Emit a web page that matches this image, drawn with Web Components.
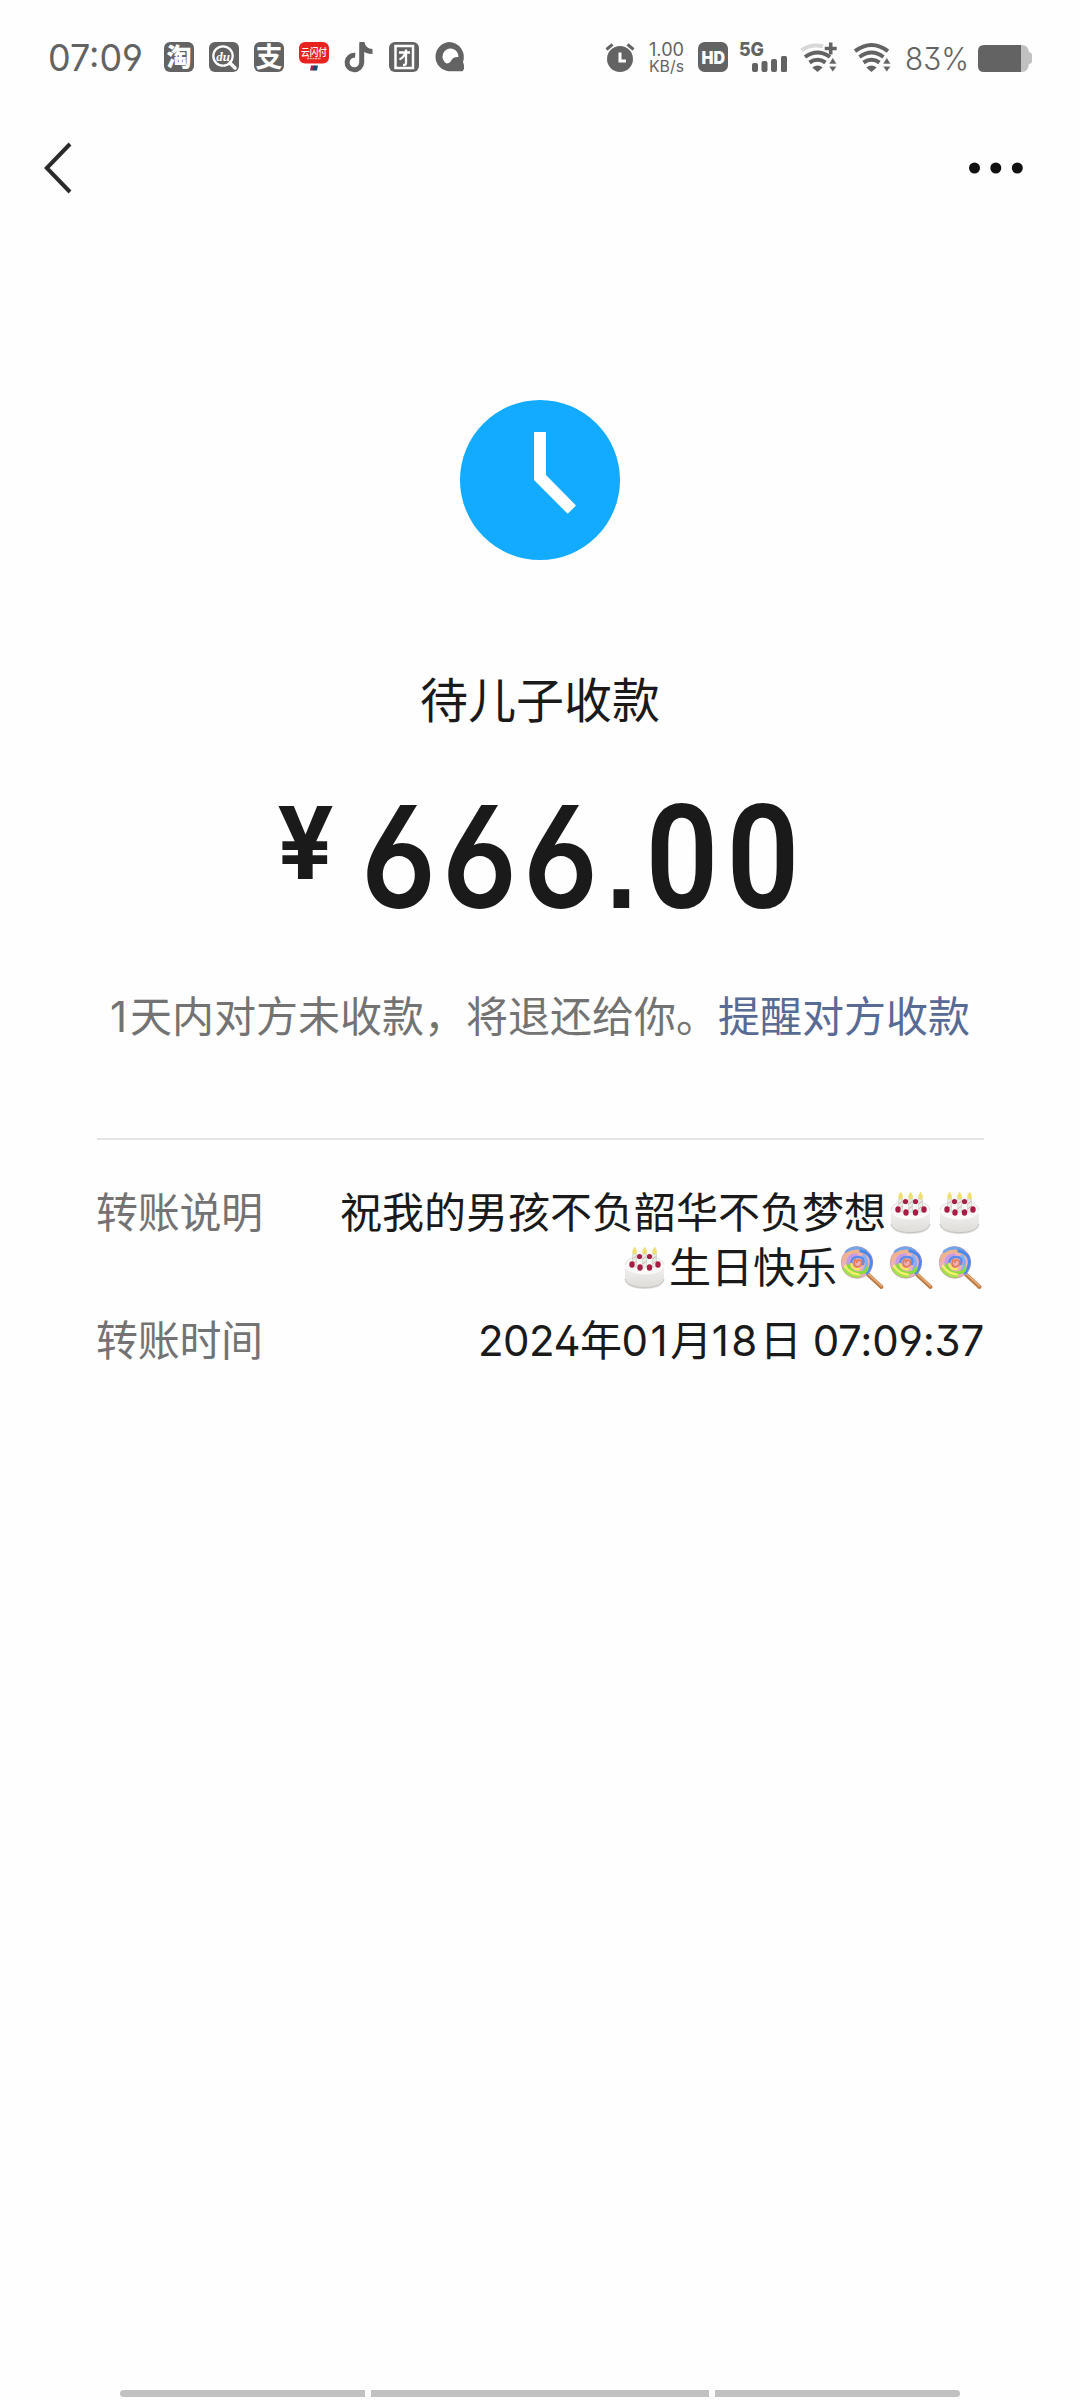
<!DOCTYPE html>
<html lang="zh-CN">
<head>
<meta charset="utf-8">
<title>转账</title>
<style>
html,body{margin:0;background:#fefefe}
body{width:1080px;height:2400px;overflow:hidden;font-family:Inter,"Noto Sans CJK SC",sans-serif;font-feature-settings:"cv03","cv04","ss01"}
</style>
</head>
<body>
<transfer-page></transfer-page>
<script>
const define = (name, html) => customElements.define(name, class extends HTMLElement {
  constructor() {
    super();
    this.attachShadow({mode: 'open'}).innerHTML = html;
  }
});

/* A run of text set to an exact width: w, h = box; size = font size; base = baseline. */
customElements.define('fit-text', class extends HTMLElement {
  connectedCallback() {
    const a = n => this.getAttribute(n);
    this.attachShadow({mode: 'open'}).innerHTML = `<style>:host{display:block;flex:none}svg{display:block;overflow:visible}</style>
      <svg width="${a('w')}" height="${a('h')}"><text x="0" y="${a('base')}" font-size="${a('size')}" font-weight="${a('weight') || 400}" fill="currentColor" textLength="${a('w')}" lengthAdjust="spacingAndGlyphs">${a('text')}</text></svg>`;
  }
});

/* The large amount: condensed digits on an even 81px pitch. */
customElements.define('amount-digits', class extends HTMLElement {
  connectedCallback() {
    const k = .88, at = (...xs) => xs.map(x => (x / k).toFixed(1)).join(' ');
    this.attachShadow({mode: 'open'}).innerHTML = `<style>:host{display:block;flex:none}svg{display:block;overflow:visible}</style>
      <svg width="440" height="105"><text transform="scale(${k} 1)" y="105" font-size="142" font-weight="600" fill="currentColor" x="${at(1, 82, 163)}">666<tspan font-family="Liberation Sans" font-size="126" font-weight="700" x="${at(246)}">.</tspan><tspan font-family="Roboto" font-size="145" x="${at(285.5, 366.5)}">00</tspan></text></svg>`;
  }
});

const CJK = `font-family="Noto Sans CJK SC" text-anchor="middle"`;
const icons = {
  tao: [30, 30, `<rect width="30" height="30" rx="6" fill="currentColor"/><text ${CJK} x="15" y="24" font-size="25" font-weight="900" fill="#fff">淘</text>`],
  du: [30, 30, `<rect width="30" height="30" rx="6" fill="currentColor"/><circle cx="14" cy="14" r="9.700" fill="none" stroke="#fff" stroke-width="2.200"/><path d="M21 21l5 5" stroke="#fff" stroke-width="3.500" stroke-linecap="round"/><text x="14" y="18.500" text-anchor="middle" font-family="Liberation Serif" font-style="italic" font-weight="700" font-size="13" fill="#fff">du</text>`],
  zhi: [30, 30, `<rect width="30" height="30" rx="6" fill="currentColor"/><text ${CJK} x="15" y="25" font-size="27" font-weight="700" fill="#fff">支</text>`],
  ysf: [30, 30, `<rect width="30" height="21.500" rx="6" fill="#e8231f"/><text ${CJK} x="15" y="13.500" font-size="10" font-weight="500" fill="#fff" textLength="26" lengthAdjust="spacingAndGlyphs">云闪付</text><path d="M8 16.500h14" stroke="#ffb3ae" stroke-width="1.500" stroke-dasharray="2 .7"/><path d="M12 23.500h4l-1 5h-4z" fill="#a3204a"/><path d="M15 23.500h4l-1 5h-4z" fill="#0b4f70"/>`],
  tok: [30, 30, `<path d="M17.700 1.500V20.500A7.300 7.300 0 1 1 11.200 13.200" fill="none" stroke="currentColor" stroke-width="5"/><path d="M15.200 0h5.200Q21.500 6.500 28.500 7v5Q21.500 11.800 17.500 8z" fill="currentColor"/>`],
  tuan: [30, 30, `<rect width="30" height="30" rx="6" fill="currentColor"/><rect x="6.500" y="4" width="17.500" height="22" fill="none" stroke="#fff" stroke-width="2.500"/><path d="M10 10.500h11M17 7.500v13.500q0 2-2 2h-1M16 12q-2 4-5.500 5.500" fill="none" stroke="#fff" stroke-width="2.300"/>`],
  q: [30, 30, `<path d="M15 0a15 15 0 0 1 14 20q1.500 3 1 7l-1.500 2.300H15A14.700 14.700 0 0 1 15 0z" fill="currentColor"/><path d="M12.500 21.500a8 8 0 1 1 12-6.500q-5 -.5-7 3-1.300 3.200-5 3.500z" fill="#fff"/>`],
  alarm: [30, 30, `<circle cx="15" cy="17" r="13" fill="currentColor"/><path d="M1.500 7.500l6-5.200M28.500 7.500l-6-5.200" stroke="currentColor" stroke-width="3"/><path d="M15 10.500v8.500h6" fill="none" stroke="#fff" stroke-width="3"/>`],
  hd: [30, 30, `<rect width="30" height="30" rx="6.500" fill="currentColor"/><text x="3.500" y="21.500" font-family="Inter" font-weight="900" font-size="17" fill="#fff" textLength="23.500" lengthAdjust="spacingAndGlyphs">HD</text>`],
  sig: [48, 30, `<text x="-1" y="14.200" font-family="Inter" font-weight="800" font-size="19" fill="currentColor" textLength="25" lengthAdjust="spacingAndGlyphs">5G</text><rect x="12" y="21" width="6" height="9" rx="2" fill="currentColor"/><rect x="21.500" y="19" width="6" height="11" rx="2" fill="currentColor"/><rect x="31" y="17" width="6" height="13" rx="2" fill="currentColor"/><rect x="41" y="14" width="6" height="16" rx="1.500" fill="currentColor"/>`],
  wifiplus: [38, 30, `<path d="M1.500 8.200Q11 1.500 23 4.200" fill="none" stroke="#d8d8d8" stroke-width="4"/><path d="M5 15Q17.500 6 30 15M9.500 20.500Q17.500 15 25.500 20.500" fill="none" stroke="currentColor" stroke-width="4"/><path d="M12.300 25.500Q17.500 21.500 22.700 25.500L17.500 30Z" fill="currentColor"/><path d="M30.700.500v12M24.700 6.500h12" stroke="currentColor" stroke-width="3.600"/><path d="M32.800 15.500l4 6.500h-8zM32.800 30l4-5.800h-8z" fill="currentColor" stroke="#fefefe" stroke-width=".6"/>`],
  wifi: [38, 30, `<path d="M2 9.200Q18.500-3.200 35 9.200M6.500 15Q18.500 6 30.500 15M10.500 20.500Q18.500 15 26.500 20.500" fill="none" stroke="currentColor" stroke-width="4"/><path d="M13.300 25.500Q18.500 21.500 23.700 25.500L18.500 30Z" fill="currentColor"/><path d="M33.800 15.500l4 6.500h-8zM33.800 30l4-5.800h-8z" fill="currentColor" stroke="#fefefe" stroke-width=".6"/>`],
  battery: [54, 27, `<path d="M42 0h2q6 0 7 7 3 .5 3 3v6q0 3-3 3-1 8-7 8h-2z" fill="#c1c1c1"/><path d="M43 0H6Q0 0 0 6v15q0 6 6 6h37z" fill="currentColor"/>`],
  back: [28, 52, `<path d="M26 2L2.800 26L26 50" fill="none" stroke="#2b2b2b" stroke-width="4"/>`],
  more: [54, 12, `<g fill="#111"><circle cx="5.500" cy="6" r="5.500"/><circle cx="26.800" cy="6" r="5.500"/><circle cx="48.300" cy="6" r="5.500"/></g>`],
  clock: [160, 160, `<circle cx="80" cy="80" r="80" fill="#12abff"/><path d="M74 32h12v43l30 30.500-8.300 8.300L74 80z" fill="#fff"/>`],
  cake: [49, 49, `<defs><linearGradient id="s" x1="0" x2="0" y1="0" y2="1"><stop offset="0" stop-color="#f3f2f0"/><stop offset="1" stop-color="#dddbd8"/></linearGradient></defs>
    <path d="M5 22v15c0 5 8 9 19.500 9S44 42 44 37V22z" fill="url(#s)"/><path d="M5 36c1 5 8 8.600 19.500 8.600S43 41 44 36" fill="none" stroke="#c7c4c0" stroke-width="1"/>
    <ellipse cx="24.500" cy="22" rx="19.500" ry="9.500" fill="#fbfaf8"/><path d="M5 22a19.500 9.500 0 0 1 39 0" fill="none" stroke="#dcd9d5" stroke-width=".8"/>
    <g fill="#a52045"><circle cx="19.500" cy="13.500" r="2.600"/><circle cx="29.500" cy="13.500" r="2.600"/></g>
    <g fill="#e3efe7" stroke="#c5d2c8" stroke-width=".6"><rect x="12.500" y="11" width="4.200" height="13"/><rect x="22.500" y="11" width="4.200" height="13"/><rect x="32.500" y="11" width="4.200" height="13"/></g>
    <path d="M12.500 16l4-3M12.500 21l4-3M22.500 16l4-3M22.500 21l4-3M32.500 16l4-3M32.500 21l4-3" stroke="#e9a9a8" stroke-width="1"/>
    <g fill="#efdf72"><path d="M14.600 3.500q5 7.500 0 8-5-.5 0-8zM24.600 3.500q5 7.500 0 8-5-.5 0-8zM34.600 3.500q5 7.500 0 8-5-.5 0-8z"/></g>
    <g fill="#a91c44"><ellipse cx="12" cy="21.500" rx="2.700" ry="3.200"/><ellipse cx="20" cy="24.500" rx="2.700" ry="3.200"/><ellipse cx="29.500" cy="24.500" rx="2.700" ry="3.200"/><ellipse cx="38" cy="21.500" rx="2.700" ry="3.200"/></g>`],
  lolly: [49, 49, `<path d="M31 31.500L44.500 44" stroke="#bd7b45" stroke-width="4" stroke-linecap="round"/><path d="M31 30.500L44.500 43" stroke="#e7ae76" stroke-width="1.600" stroke-linecap="round"/>
    <circle cx="20" cy="19.500" r="16" fill="#eeb0b8"/>
    <g fill="none" stroke-width="3.200" stroke-linecap="round">
    <path d="M9.500 8.500Q19 1.500 28.500 8" stroke="#6fa6ea"/>
    <path d="M6 17Q9 9 18 8.500T29 12" stroke="#f0b48a"/>
    <path d="M24 8Q34 10 34.500 19 34 26 30 30" stroke="#4a8af0"/>
    <path d="M27 13Q32 20 27 28" stroke="#86aef5"/>
    <path d="M11 20Q12 30 21 30T30 25" stroke="#8ade3c"/>
    <path d="M7 26Q12 34 22 33.500" stroke="#a6e04a"/>
    <path d="M8 23Q13 31 22 31.500" stroke="#f7f06a" stroke-width="2.200"/>
    <path d="M11 20Q11 12 19 12" stroke="#c79ae6"/>
    <path d="M14 21Q14 14 21 14T26 21" stroke="#5b8cf0" stroke-width="2.600"/>
    <path d="M14 21Q16 27 22 26" stroke="#f4ea5c" stroke-width="2.200"/></g>
    <path d="M20 20q-1-3 2-3 4 1 2 5-3 3-6 1-2-4 1-7" fill="none" stroke="#e07a55" stroke-width="1.700"/>
    <circle cx="20" cy="19.500" r="15.700" fill="none" stroke="#a990c4" stroke-opacity=".55" stroke-width=".8"/>`]
};
customElements.define('ui-icon', class extends HTMLElement {
  connectedCallback() {
    const [w, h, body] = icons[this.getAttribute('name')];
    this.attachShadow({mode: 'open'}).innerHTML = `<style>:host{display:inline-block;flex:none}svg{display:block;overflow:visible}</style><svg width="${w}" height="${h}" viewBox="0 0 ${w} ${h}">${body}</svg>`;
  }
});

define('status-bar', `<style>
:host{display:flex;height:114px;box-sizing:border-box;padding:0 48px;justify-content:space-between;align-items:center;color:#636363}
.l,.r{display:flex;align-items:center}
.apps{display:flex;gap:15px;margin-left:21px}
.net{display:flex;flex-direction:column;gap:3px;margin:0 14px 0 14px}
</style>
<div class="l"><fit-text text="07:09" w="95" h="27" base="27" size="37" weight="400"></fit-text>
<div class="apps"><ui-icon name="tao"></ui-icon><ui-icon name="du"></ui-icon><ui-icon name="zhi"></ui-icon><ui-icon name="ysf"></ui-icon><ui-icon name="tok"></ui-icon><ui-icon name="tuan"></ui-icon><ui-icon name="q"></ui-icon></div></div>
<div class="r"><ui-icon name="alarm"></ui-icon>
<div class="net"><fit-text text="1.00" w="35" h="13" base="13" size="18"></fit-text><fit-text text="KB/s" w="35" h="13" base="13" size="16"></fit-text></div>
<ui-icon name="hd"></ui-icon>
<ui-icon name="sig" style="margin-left:12px"></ui-icon>
<ui-icon name="wifiplus" style="margin-left:12px"></ui-icon>
<ui-icon name="wifi" style="margin-left:15px"></ui-icon>
<fit-text style="margin:3px 9px 0 14px" text="83%" w="64" h="23" base="23" size="31" weight="300"></fit-text>
<ui-icon name="battery" style="margin-top:3px"></ui-icon></div>`);

define('nav-bar', `<style>:host{display:flex;height:108px;box-sizing:border-box;padding:0 57px 0 44px;align-items:center;justify-content:space-between}</style>
<ui-icon name="back"></ui-icon><ui-icon name="more"></ui-icon>`);

define('transfer-status', `<style>
:host{display:flex;flex-direction:column;align-items:center;padding-top:178px;color:#1a1a1a}
.t{margin-top:111px;font-size:48px;line-height:60px;height:60px}
.amt{display:flex;align-self:flex-start;gap:26px;align-items:flex-start;margin-top:72px;height:106px;padding-left:277px}
.amt fit-text:first-child{margin-top:3px}
.msg{margin-top:78px;height:59px;font-size:42px;line-height:60px;color:#737373;white-space:nowrap}
.msg a{color:#576b95}
</style>
<ui-icon name="clock"></ui-icon>
<div class="t"><slot name="title"></slot></div>
<div class="amt"><fit-text text="¥" w="57" h="73" base="73" size="100" weight="700"></fit-text><amount-digits></amount-digits></div>
<div class="msg"><slot name="hint"></slot><a><slot name="action"></slot></a></div>`);

define('detail-row', `<style>
:host{display:flex;justify-content:space-between;font-size:42px;line-height:54.500px;color:#1a1a1a}
.k{color:#737373;margin-left:-1px;letter-spacing:-.3px}
.v{text-align:right;letter-spacing:var(--ls,0)}
</style><div class="k"><slot name="label"></slot></div><div class="v"><slot></slot></div>`);

define('note-line', `<style>:host{display:flex;height:54.500px;justify-content:flex-end;align-items:center;white-space:nowrap}::slotted(ui-icon){margin-top:-1px}</style><slot></slot>`);

define('detail-list', `<style>:host{display:flex;flex-direction:column;gap:19px;margin:92px 96px 0 97px;padding-top:46px;border-top:2px solid #e5e5e5}</style><slot></slot>`);

define('gesture-bar', `<style>:host{display:flex;gap:6px;margin:auto 120px 3px;height:7px}i{flex:245;background:#c1c1c1}i:nth-of-type(2){flex:338}i:first-of-type{border-radius:4px 0 0 4px}i:last-of-type{border-radius:0 4px 4px 0}</style><i></i><i></i><i></i>`);

define('transfer-page', `<style>:host{display:flex;flex-direction:column;width:1080px;height:2400px}.wide{letter-spacing:2.500px}.clock{letter-spacing:-.2px}.one{letter-spacing:3px}</style>
<status-bar></status-bar>
<nav-bar></nav-bar>
<transfer-status><span slot="title">待儿子收款</span><span slot="hint"><span class="one">1</span>天内对方未收款，将退还给你。</span><span slot="action">提醒对方收款</span></transfer-status>
<detail-list>
<detail-row><span slot="label">转账说明</span>
<note-line><span>祝我的男孩不负韶华不负梦想</span><ui-icon name="cake"></ui-icon><ui-icon name="cake"></ui-icon></note-line>
<note-line><ui-icon name="cake"></ui-icon><span>生日快乐</span><ui-icon name="lolly"></ui-icon><ui-icon name="lolly"></ui-icon><ui-icon name="lolly"></ui-icon></note-line></detail-row>
<detail-row style="--ls:-.5px"><span slot="label">转账时间</span>2024年<span class="wide">01</span>月<span class="wide">18</span>日 <span class="clock">07:09:37</span></detail-row>
</detail-list>
<gesture-bar></gesture-bar>`);
</script>
</body>
</html>
